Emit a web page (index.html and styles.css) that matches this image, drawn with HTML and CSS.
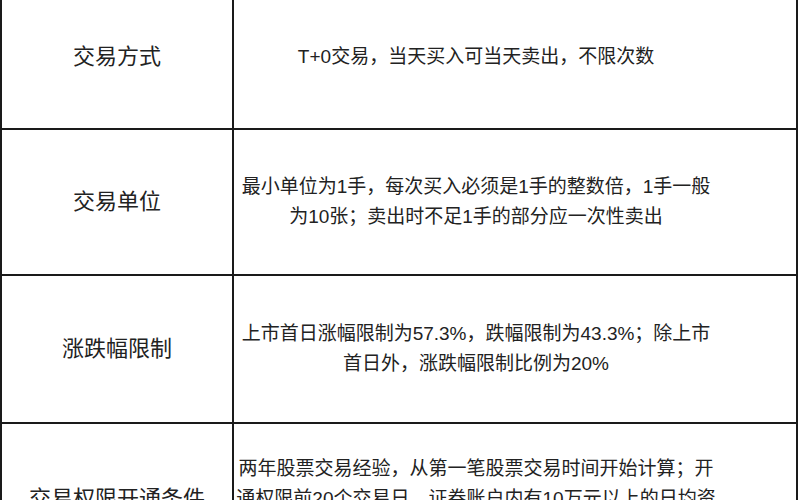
FILE: index.html
```html
<!DOCTYPE html>
<html lang="zh-CN">
<head>
<meta charset="utf-8">
<title>交易规则</title>
<link rel="stylesheet" href="styles.css">
</head>
<body>
<div class="rules">
  <div class="cell label r1">交易方式</div>
  <div class="cell value r1"><span class="line">T+0交易，当天买入可当天卖出，不限次数</span></div>

  <div class="cell label r2">交易单位</div>
  <div class="cell value r2"><span class="line">最小单位为1手，每次买入必须是1手的整数倍，1手一般</span><span class="line">为10张；卖出时不足1手的部分应一次性卖出</span></div>

  <div class="cell label r3">涨跌幅限制</div>
  <div class="cell value r3"><span class="line">上市首日涨幅限制为57.3%，跌幅限制为43.3%；除上市</span><span class="line">首日外，涨跌幅限制比例为20%</span></div>

  <div class="cell label r4">交易权限开通条件</div>
  <div class="cell value r4"><span class="line">两年股票交易经验，从第一笔股票交易时间开始计算；开</span><span class="line">通权限前20个交易日，证券账户内有10万元以上的日均资</span><span class="line">产，并通过风险承受能力测评</span></div>
</div>
</body>
</html>
```

FILE: styles.css
```css
html, body {
  margin: 0;
  padding: 0;
  background: #ffffff;
  overflow: hidden;
}

body {
  font-family: "Liberation Sans", "Noto Sans CJK SC", sans-serif;
  color: #222222;
}

.rules {
  display: grid;
  grid-template-columns: 232px 564px;
  width: 796px;
  margin-top: -16px;
  border-top: 2px solid #1a1a1a;
  border-left: 2px solid #1a1a1a;
}

.cell {
  box-sizing: border-box;
  border-right: 2px solid #1a1a1a;
  border-bottom: 2px solid #1a1a1a;
  display: flex;
  flex-direction: column;
  align-items: center;
  justify-content: center;
  text-align: center;
}

.label {
  font-size: 22px;
  line-height: 30px;
}

.value {
  font-size: 19px;
  line-height: 30px;
  padding: 0 78px 0 0;
}

.line {
  display: block;
  white-space: nowrap;
}

.r1 { height: 144px; }
.r2 { height: 146px; }
.r3 { height: 148px; }
.r4 { height: 152px; }
```
